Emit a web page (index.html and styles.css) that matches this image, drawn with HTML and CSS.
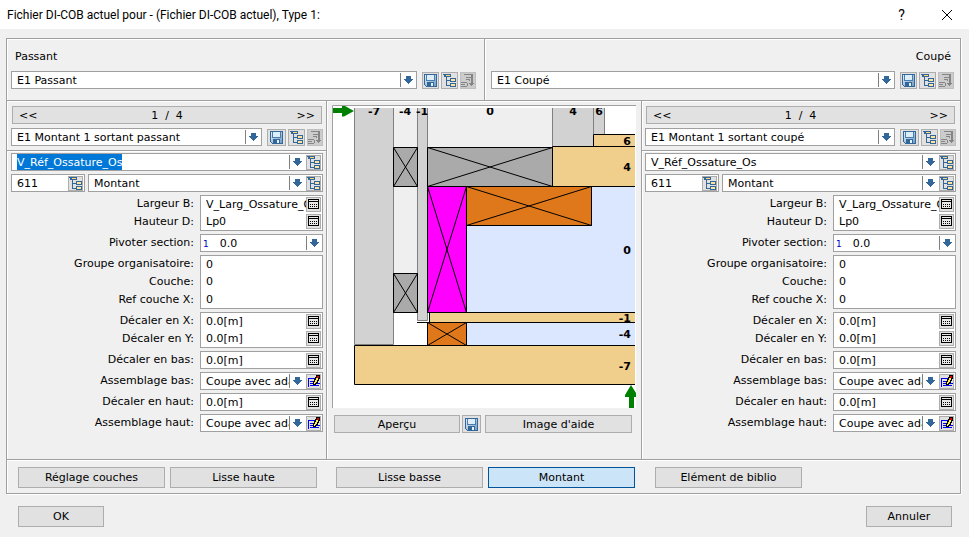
FILE: index.html
```html
<!DOCTYPE html>
<html lang="fr">
<head>
<meta charset="utf-8">
<title>Fichier DI-COB actuel</title>
<link rel="stylesheet" href="styles.css">
</head>
<body>
<svg class="sprites" aria-hidden="true">
  <defs>
    <linearGradient id="diskFill" x1="0" y1="0" x2="1" y2="1">
      <stop offset="0" stop-color="#e4f2fb"/><stop offset="1" stop-color="#6f9cc4"/>
    </linearGradient>
  </defs>
  <symbol id="disk" viewBox="0 0 13 13">
    <path d="M0 0h13v13H2L0 11z" fill="#336699"/>
    <path d="M1 1h11v11H2L1 11z" fill="url(#diskFill)"/>
    <path d="M3 1h7v5H3z" fill="#dceefa"/><path d="M2 1h1v5h7V1h1v6H2z" fill="#4a7dae"/>
    <path d="M3 8h7v4H3z" fill="#336699"/><path d="M7 9h2v3H7z" fill="#e4f2fb"/>
  </symbol>
  <symbol id="tree" viewBox="0 0 13 13">
    <path d="M0 0h8v3H4v3h3V4h6v4H7V7H4v4h3V9h6v4H7v-1H3V3H1V1H0z" fill="#336699"/>
    <path d="M3 1h4v1H3z" fill="#ffd873"/><path d="M8 5h4v2H8zM8 10h4v2H8z" fill="#ffe49a"/>
  </symbol>
  <symbol id="export" viewBox="0 0 13 13">
    <path d="M3 0h9v9h1v1h-1v1h-1v1h-1v-1H9v-1H8V9h2V1H3zM5 3h5v1H5zM5 5h4v1H5zM8 5h1v2H8zM0 8h6v1H0zM0 10h4v1H0zM0 12h6v1H0zM6 9h1v3H6z" fill="#858585"/>
  </symbol>
  <symbol id="calc" viewBox="-1 -1 13 13">
    <path d="M0 0h11v10H0z"/><path d="M1 1h9v1H1zM1 3h9v6H1z" fill="#e8e8e8"/>
    <path d="M2 5h1v1H2zM4 5h1v1H4zM6 5h1v1H6zM8 5h1v1H8zM2 7h1v1H2zM4 7h1v1H4zM6 7h1v1H6zM8 7h1v1H8z"/>
  </symbol>
  <symbol id="edit" viewBox="-1 0 13 13">
    <path d="M0 3h7v1H1v8H0zM2 6h3v1H2zM2 8h3v1H2zM2 10h9v1H2zM9 8h3v1H9z" fill="#0000f0"/>
    <path d="M8 0h4v4h-1v2h-1v2H9v1H8v1H5V6h1V4h1V2h1z"/>
    <path d="M9 1h2v2H9z" fill="#e00000"/><path d="M8 3h2v2H9v2H8v1H7v1H6V7h1V5h1z" fill="#ffee55"/>
  </symbol>
  <symbol id="arrow" viewBox="0 0 9 8">
    <path d="M2 0h5v3h2v1H8v1H7v1H6v1H5v1H4V7H3V6H2V5H1V4H0V3h2z" fill="#336699"/>
  </symbol>
</svg>

<header class="titlebar">
  <h1>Fichier DI-COB actuel pour - (Fichier DI-COB actuel), Type 1:</h1>
  <button type="button" class="caption" aria-label="Aide">?</button>
  <button type="button" class="caption" aria-label="Fermer"><svg width="10" height="10" viewBox="0 0 10 10"><path d="M0 0l10 10M10 0L0 10" stroke="#000"/></svg></button>
</header>

<main class="frame">
  <section class="elements">
    <div class="element">
      <label for="passant">Passant</label>
      <div class="pick">
        <div class="combo"><select id="passant"><option>E1 Passant</option></select><svg class="arrow"><use href="#arrow"/></svg></div>
        <button type="button" class="tool" aria-label="Enregistrer"><svg class="i13"><use href="#disk"/></svg></button>
        <button type="button" class="tool" aria-label="Arborescence"><svg class="i13"><use href="#tree"/></svg></button>
        <button type="button" class="tool off" aria-label="Exporter" disabled><svg class="i13"><use href="#export"/></svg></button>
      </div>
    </div>
    <div class="element cut">
      <label for="coupe">Coupé</label>
      <div class="pick">
        <div class="combo"><select id="coupe"><option>E1 Coupé</option></select><svg class="arrow"><use href="#arrow"/></svg></div>
        <button type="button" class="tool" aria-label="Enregistrer"><svg class="i13"><use href="#disk"/></svg></button>
        <button type="button" class="tool" aria-label="Arborescence"><svg class="i13"><use href="#tree"/></svg></button>
        <button type="button" class="tool off" aria-label="Exporter" disabled><svg class="i13"><use href="#export"/></svg></button>
      </div>
    </div>
  </section>

  <div class="columns">
    <section class="panel" aria-label="Montant passant">
      <div class="nav"><button type="button">&lt;&lt;</button><span>1  /  4</span><button type="button">&gt;&gt;</button></div>
      <div class="pick small">
        <div class="combo"><select aria-label="Montant sortant"><option>E1 Montant 1 sortant passant</option></select><svg class="arrow"><use href="#arrow"/></svg></div>
        <button type="button" class="tool save" aria-label="Enregistrer"><svg class="i13"><use href="#disk"/></svg></button>
        <button type="button" class="tool" aria-label="Arborescence"><svg class="i13"><use href="#tree"/></svg></button>
        <button type="button" class="tool off" aria-label="Exporter" disabled><svg class="i13"><use href="#export"/></svg></button>
      </div>
      <div class="details">
        <div class="box line"><input id="refP" class="active" aria-label="Référence" value="V_Réf_Ossature_Os"><button type="button" class="drop" aria-label="Choisir"><svg class="i9"><use href="#arrow"/></svg></button><button type="button" class="mini" aria-label="Arborescence"><svg class="i13"><use href="#tree"/></svg></button></div>
        <div class="type">
          <div class="box line"><input aria-label="Code" value="611"><button type="button" class="mini" aria-label="Arborescence"><svg class="i13"><use href="#tree"/></svg></button></div>
          <div class="box line"><input aria-label="Désignation" value="Montant"><button type="button" class="drop" aria-label="Choisir"><svg class="i9"><use href="#arrow"/></svg></button><button type="button" class="mini" aria-label="Arborescence"><svg class="i13"><use href="#tree"/></svg></button></div>
        </div>
        <div class="group">
          <div class="labels"><label for="p1">Largeur B:</label><label for="p2">Hauteur D:</label></div>
          <div class="box"><div class="line"><input id="p1" value="V_Larg_Ossature_Os"><button type="button" class="mini" aria-label="Calculer"><svg class="i13"><use href="#calc"/></svg></button></div><div class="line"><input id="p2" value="Lp0"><button type="button" class="mini" aria-label="Calculer"><svg class="i13"><use href="#calc"/></svg></button></div></div>
        </div>
        <div class="group">
          <div class="labels"><label for="p3">Pivoter section:</label></div>
          <div class="box"><div class="line"><span class="unit">1</span><input id="p3" value="0.0"><button type="button" class="drop last" aria-label="Choisir"><svg class="i9"><use href="#arrow"/></svg></button></div></div>
        </div>
        <div class="group">
          <div class="labels"><label for="p4">Groupe organisatoire:</label><label for="p5">Couche:</label><label for="p6">Ref couche X:</label></div>
          <div class="box"><div class="line"><input id="p4" value="0"></div><div class="line"><input id="p5" value="0"></div><div class="line"><input id="p6" value="0"></div></div>
        </div>
        <div class="group">
          <div class="labels"><label for="p7">Décaler en X:</label><label for="p8">Décaler en Y:</label></div>
          <div class="box"><div class="line"><input id="p7" value="0.0[m]"><button type="button" class="mini" aria-label="Calculer"><svg class="i13"><use href="#calc"/></svg></button></div><div class="line"><input id="p8" value="0.0[m]"><button type="button" class="mini" aria-label="Calculer"><svg class="i13"><use href="#calc"/></svg></button></div></div>
        </div>
        <div class="group">
          <div class="labels"><label for="p9">Décaler en bas:</label></div>
          <div class="box"><div class="line"><input id="p9" value="0.0[m]"><button type="button" class="mini" aria-label="Calculer"><svg class="i13"><use href="#calc"/></svg></button></div></div>
        </div>
        <div class="group">
          <div class="labels"><label for="p10">Assemblage bas:</label></div>
          <div class="box"><div class="line"><input id="p10" value="Coupe avec adaptation"><button type="button" class="drop" aria-label="Choisir"><svg class="i9"><use href="#arrow"/></svg></button><button type="button" class="mini" aria-label="Modifier"><svg class="i13"><use href="#edit"/></svg></button></div></div>
        </div>
        <div class="group">
          <div class="labels"><label for="p11">Décaler en haut:</label></div>
          <div class="box"><div class="line"><input id="p11" value="0.0[m]"><button type="button" class="mini" aria-label="Calculer"><svg class="i13"><use href="#calc"/></svg></button></div></div>
        </div>
        <div class="group">
          <div class="labels"><label for="p12">Assemblage haut:</label></div>
          <div class="box"><div class="line"><input id="p12" value="Coupe avec adaptation"><button type="button" class="drop" aria-label="Choisir"><svg class="i9"><use href="#arrow"/></svg></button><button type="button" class="mini" aria-label="Modifier"><svg class="i13"><use href="#edit"/></svg></button></div></div>
        </div>
      </div>
    </section>

    <section class="preview" aria-label="Aperçu de la section">
      <svg class="drawing" viewBox="0 0 304 303" role="img" aria-label="Coupe des couches">
        <g transform="translate(-332 -105)">
          <path d="M332 105h304v303H332z" fill="#fff"/>
          <path d="M394 108h23v205h-23zM428 108h124v39H428z" fill="#efefef"/>
          <g fill="#d2d2d2" stroke="#808080">
            <path d="M354.500 108V344.500H393.500V108M417.500 108V320.500H427.500V108M552.500 108V146.500H593.500V108M593.500 108V134.500H604.500V108"/>
          </g>
          <path d="M467 187h168v125H467zM467 323h168v22H467z" fill="#dbe6ff"/>
          <g fill="#f0ce8c" stroke="#000">
            <path d="M635 134.500H593.500V146.500H635M635 146.500H552.500V186.500H635M635 312.500H429.500V322.500H635M635 345.500H354.500V384.500H635"/>
            <path d="M417 322.500H635" fill="none"/>
          </g>
          <g stroke="#000">
            <path d="M427.500 147.500h125v39h-125zl125 39m0-39l-125 39M393.500 147.500h24v39h-24zl24 39m0-39l-24 39M393.500 273.500h24v39h-24zl24 39m0-39l-24 39" fill="#aaa"/>
            <path d="M427.500 186.500h39v126h-39zl39 126m0-126l-39 126" fill="#f0f"/>
            <path d="M466.500 186.500h125v39h-125zl125 39m0-39l-125 39M427.500 322.500h39v23h-39zl39 23m0-23l-39 23" fill="#de781a"/>
          </g>
          <path d="M333 108h9v-2l3 0 9 5-10 5.500-2 0V113h-9zM629 408V397h-4v-2l6-10 5 8v4h-2v11z" fill="#008000"/>
          <svg x="332" y="108" width="304" height="12" viewBox="332 108 304 12">
            <g class="axis" text-anchor="middle"><text x="374" y="115">-7</text><text x="405" y="115">-4</text><text x="422" y="115">-1</text><text x="490" y="115">0</text><text x="573" y="115">4</text><text x="599" y="115">6</text></g>
          </svg>
          <g class="axis" text-anchor="end"><text x="631" y="145">6</text><text x="631" y="171">4</text><text x="631" y="254">0</text><text x="631" y="322">-1</text><text x="631" y="338">-4</text><text x="631" y="370">-7</text></g>
          <path d="M332.500 408V105.500H636" fill="none" stroke="#a0a0a0"/>
        </g>
      </svg>
      <div class="actions">
        <button type="button" class="btn short">Aperçu</button>
        <button type="button" class="btn icon" aria-label="Enregistrer l'image"><svg class="i13"><use href="#disk"/></svg></button>
        <button type="button" class="btn wide">Image d'aide</button>
      </div>
    </section>

    <section class="panel right" aria-label="Montant coupé">
      <div class="nav"><button type="button">&lt;&lt;</button><span>1  /  4</span><button type="button">&gt;&gt;</button></div>
      <div class="pick small">
        <div class="combo"><select aria-label="Montant sortant"><option>E1 Montant 1 sortant coupé</option></select><svg class="arrow"><use href="#arrow"/></svg></div>
        <button type="button" class="tool save" aria-label="Enregistrer"><svg class="i13"><use href="#disk"/></svg></button>
        <button type="button" class="tool" aria-label="Arborescence"><svg class="i13"><use href="#tree"/></svg></button>
        <button type="button" class="tool off" aria-label="Exporter" disabled><svg class="i13"><use href="#export"/></svg></button>
      </div>
      <div class="details">
        <div class="box line"><input aria-label="Référence" value="V_Réf_Ossature_Os"><button type="button" class="drop" aria-label="Choisir"><svg class="i9"><use href="#arrow"/></svg></button><button type="button" class="mini" aria-label="Arborescence"><svg class="i13"><use href="#tree"/></svg></button></div>
        <div class="type">
          <div class="box line"><input aria-label="Code" value="611"><button type="button" class="mini" aria-label="Arborescence"><svg class="i13"><use href="#tree"/></svg></button></div>
          <div class="box line"><input aria-label="Désignation" value="Montant"><button type="button" class="drop" aria-label="Choisir"><svg class="i9"><use href="#arrow"/></svg></button><button type="button" class="mini" aria-label="Arborescence"><svg class="i13"><use href="#tree"/></svg></button></div>
        </div>
        <div class="group">
          <div class="labels"><label for="c1">Largeur B:</label><label for="c2">Hauteur D:</label></div>
          <div class="box"><div class="line"><input id="c1" value="V_Larg_Ossature_Os"><button type="button" class="mini" aria-label="Calculer"><svg class="i13"><use href="#calc"/></svg></button></div><div class="line"><input id="c2" value="Lp0"><button type="button" class="mini" aria-label="Calculer"><svg class="i13"><use href="#calc"/></svg></button></div></div>
        </div>
        <div class="group">
          <div class="labels"><label for="c3">Pivoter section:</label></div>
          <div class="box"><div class="line"><span class="unit">1</span><input id="c3" value="0.0"><button type="button" class="drop last" aria-label="Choisir"><svg class="i9"><use href="#arrow"/></svg></button></div></div>
        </div>
        <div class="group">
          <div class="labels"><label for="c4">Groupe organisatoire:</label><label for="c5">Couche:</label><label for="c6">Ref couche X:</label></div>
          <div class="box"><div class="line"><input id="c4" value="0"></div><div class="line"><input id="c5" value="0"></div><div class="line"><input id="c6" value="0"></div></div>
        </div>
        <div class="group">
          <div class="labels"><label for="c7">Décaler en X:</label><label for="c8">Décaler en Y:</label></div>
          <div class="box"><div class="line"><input id="c7" value="0.0[m]"><button type="button" class="mini" aria-label="Calculer"><svg class="i13"><use href="#calc"/></svg></button></div><div class="line"><input id="c8" value="0.0[m]"><button type="button" class="mini" aria-label="Calculer"><svg class="i13"><use href="#calc"/></svg></button></div></div>
        </div>
        <div class="group">
          <div class="labels"><label for="c9">Décaler en bas:</label></div>
          <div class="box"><div class="line"><input id="c9" value="0.0[m]"><button type="button" class="mini" aria-label="Calculer"><svg class="i13"><use href="#calc"/></svg></button></div></div>
        </div>
        <div class="group">
          <div class="labels"><label for="c10">Assemblage bas:</label></div>
          <div class="box"><div class="line"><input id="c10" value="Coupe avec adaptation"><button type="button" class="drop" aria-label="Choisir"><svg class="i9"><use href="#arrow"/></svg></button><button type="button" class="mini" aria-label="Modifier"><svg class="i13"><use href="#edit"/></svg></button></div></div>
        </div>
        <div class="group">
          <div class="labels"><label for="c11">Décaler en haut:</label></div>
          <div class="box"><div class="line"><input id="c11" value="0.0[m]"><button type="button" class="mini" aria-label="Calculer"><svg class="i13"><use href="#calc"/></svg></button></div></div>
        </div>
        <div class="group">
          <div class="labels"><label for="c12">Assemblage haut:</label></div>
          <div class="box"><div class="line"><input id="c12" value="Coupe avec adaptation"><button type="button" class="drop" aria-label="Choisir"><svg class="i9"><use href="#arrow"/></svg></button><button type="button" class="mini" aria-label="Modifier"><svg class="i13"><use href="#edit"/></svg></button></div></div>
        </div>
      </div>
    </section>
  </div>

  <nav class="tabs">
    <div><button type="button" class="btn">Réglage couches</button><button type="button" class="btn">Lisse haute</button></div>
    <div><button type="button" class="btn">Lisse basse</button><button type="button" class="btn current">Montant</button></div>
    <div><button type="button" class="btn">Elément de biblio</button></div>
  </nav>
</main>

<footer class="footer">
  <button type="button" class="btn">OK</button>
  <button type="button" class="btn">Annuler</button>
</footer>
<script src="main.js"></script>
</body>
</html>
```
FILE: styles.css
```css
* { box-sizing: border-box; }

body {
  margin: 0;
  background: #f0f0f0;
  color: #000;
  font: 11px/18px Verdana, "DejaVu Sans", sans-serif;
}

button, input, select {
  margin: 0;
  padding: 0;
  border: 0;
  border-radius: 0;
  outline: 0;
  background: transparent;
  color: inherit;
  font: inherit;
}

svg { display: block; flex: none; }
.sprites { position: absolute; width: 0; height: 0; }
.i13 { width: 13px; height: 13px; shape-rendering: crispEdges; }
.i9 { width: 9px; height: 8px; shape-rendering: crispEdges; }

.titlebar {
  display: flex;
  align-items: center;
  height: 29px;
  padding-left: 7px;
  background: #fff;
  font-family: "Segoe UI", Roboto, sans-serif;
}
.titlebar h1 { flex: 1; margin: 0; font-size: 12px; font-weight: 400; }
.caption { display: flex; align-items: center; justify-content: center; width: 45px; height: 28px; font-size: 14px; }

.frame {
  margin: 9px 8px 0 6px;
  border: 1px solid #a0a0a0;
  box-shadow: inset 1px 1px #fff, 1px 1px #fff;
}

.elements { display: grid; grid-template-columns: 477fr 476fr; border-bottom: 1px solid #a0a0a0; }
.element { padding: 8px 8px 11px 4px; }
.element label { display: block; padding: 1px 4px 0; margin-bottom: 5px; }
.cut { border-left: 1px solid #a0a0a0; box-shadow: inset 1px 1px #fff; padding: 8px 6px 11px; }
.cut label { text-align: right; padding: 1px 3px 0; }

.pick { display: flex; align-items: flex-end; gap: 2px; }
.combo { position: relative; flex: 1; min-width: 0; height: 18px; margin-right: 3px; border: 1px solid #a0a0a0; background: #fff; }
.combo select { display: block; appearance: none; width: 100%; height: 16px; padding: 1px 20px 0 5px; line-height: 16px; }
.arrow {
  position: absolute;
  top: 1px;
  right: 0;
  width: 16px;
  height: 14px;
  padding: 3px;
  border-left: 1px solid #808080;
  pointer-events: none;
  shape-rendering: crispEdges;
}
.tool { display: flex; align-items: center; justify-content: center; width: 17px; height: 17px; border: 1px solid #adadad; background: #e1e1e1; }
.tool.save { width: 19px; }
.tool.off { width: 16px; background: #ccc; border-color: #bfbfbf; justify-content: flex-start; }

.columns, .tabs { display: grid; grid-template-columns: 320fr 314fr 319fr; }
.panel { padding: 5px 3px 27px 4px; border-right: 1px solid #a0a0a0; box-shadow: inset 0 1px #fff, 1px 0 #fff; }
.panel.right { padding: 5px 4px 27px 3px; border-right: 0; border-left: 1px solid #a0a0a0; box-shadow: inset 1px 1px #fff; }
.nav { display: flex; justify-content: space-between; height: 18px; margin: 0 1px 4px; padding: 0 6px; border: 1px solid #adadad; background: #e1e1e1; line-height: 18px; white-space: pre; }

.details { display: flex; flex-direction: column; gap: 3px; margin: 4px -3px 0 -4px; padding: 2px 3px 0 4px; border-top: 1px solid #a0a0a0; box-shadow: inset 0 1px #fff; }
.right .details { margin: 4px -4px 0 -3px; padding: 2px 4px 0 3px; }
.type { display: grid; grid-template-columns: 74px 1fr; gap: 3px; }

.box { border: 1px solid #a0a0a0; background: #fff; min-width: 0; }
.line { display: flex; align-items: flex-start; height: 18px; min-width: 0; padding-right: 1px; }
.group .line:first-child { height: 17px; }
.group .line:last-child { height: 17px; }
.group .line:only-child { height: 16px; }
.line input { flex: 1; width: 0; min-width: 0; height: 16px; padding: 1px 0 0 5px; }
.mini { display: flex; align-items: center; justify-content: center; width: 15px; height: 15px; margin-top: 1px; border: 1px solid #adadad; background: #e1e1e1; overflow: hidden; }
.drop { display: flex; align-items: center; justify-content: center; width: 16px; height: 14px; margin: 1px 1px 0 0; border-left: 1px solid #808080; }
.drop.last { width: 15px; margin-right: 0; }
.unit { padding-left: 2px; color: #0000c0; font-size: 9px; }
.unit + input { padding-left: 11px; }
.active::selection { background: #0078d7; color: #fff; }

.group { display: grid; grid-template-columns: 1fr 123px; gap: 6px; }
.labels { text-align: right; }
.labels label { display: block; height: 18px; line-height: 18px; }

.preview { padding: 4px 0 0 5px; box-shadow: inset 0 1px #fff; }
.drawing { width: 304px; max-width: 100%; height: auto; }
.axis { font: bold 11px Verdana, "DejaVu Sans", sans-serif; }
.actions { display: flex; margin: 7px 0 0 2px; }
.actions .btn { height: 18px; }
.actions .short { width: 126px; margin-right: 2px; }
.actions .icon { width: 19px; margin-right: 4px; }
.actions .wide { width: 147px; }

.btn { display: flex; align-items: center; justify-content: center; height: 21px; padding-top: 1px; border: 1px solid #adadad; background: #e1e1e1; }
.btn.current { border-color: #005499; background: #cce4f7; }

.tabs { border-top: 1px solid #a0a0a0; box-shadow: inset 0 1px #fff; padding: 7px 0 5px; }
.tabs div { display: flex; gap: 5px; padding-left: 11px; }
.tabs div + div { padding-left: 9px; }
.tabs div + div + div { padding-left: 14px; }
.tabs .btn { width: 147px; }

.footer { display: flex; justify-content: space-between; padding: 12px 17px 9px 18px; }
.footer .btn { width: 86px; }
```
FILE: main.js
```js
const active = document.getElementById("refP");
active.focus();
active.select();
```
